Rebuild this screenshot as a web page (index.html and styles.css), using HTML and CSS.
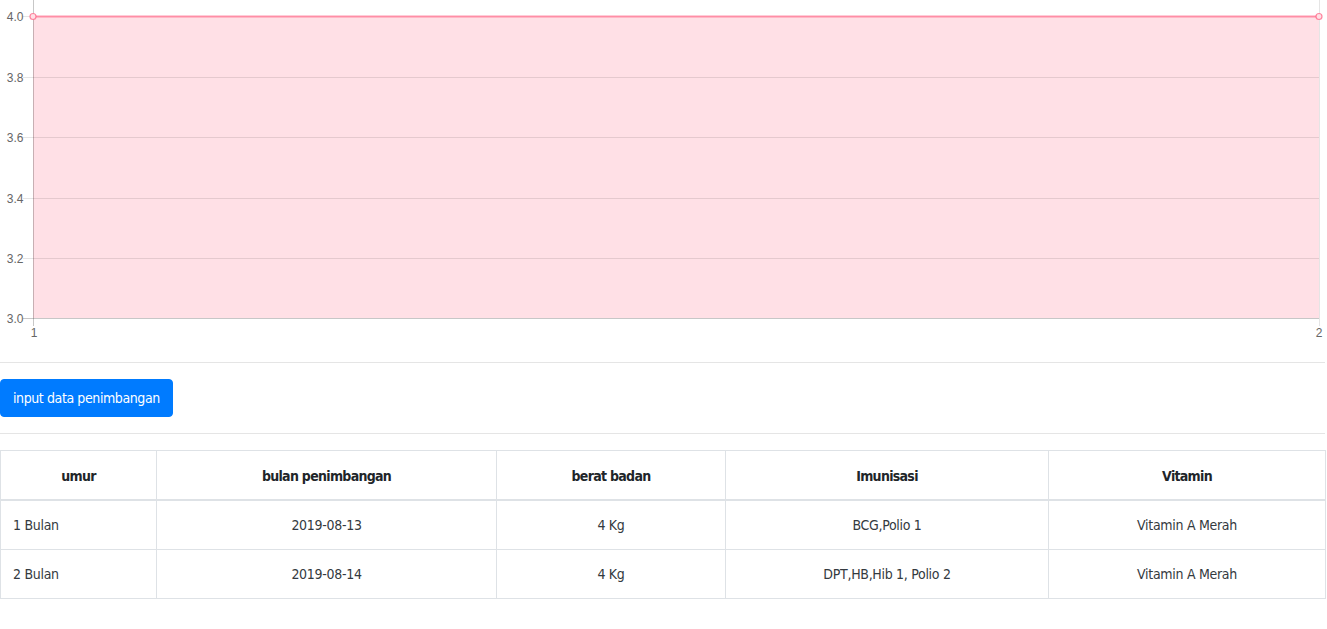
FILE: index.html
```html
<!DOCTYPE html>
<html lang="id">
<head>
<meta charset="utf-8">
<title>Grafik Penimbangan</title>
<link rel="stylesheet" href="styles.css">
</head>
<body>
<main class="page">
  <div class="chart">
    <svg width="1327" height="346" viewBox="0 0 1327 346" xmlns="http://www.w3.org/2000/svg">
      <rect x="33" y="16" width="1286" height="302" fill="#ffe0e6"/>
      <g stroke="rgba(0,0,0,0.1)" stroke-width="1">
        <line x1="23" y1="77.5" x2="1319" y2="77.5"/>
        <line x1="23" y1="137.5" x2="1319" y2="137.5"/>
        <line x1="23" y1="198.5" x2="1319" y2="198.5"/>
        <line x1="23" y1="258.5" x2="1319" y2="258.5"/>
        <line x1="23" y1="16.5" x2="33" y2="16.5"/>
        <line x1="1319.5" y1="0" x2="1319.5" y2="326"/>
      </g>
      <g stroke="rgba(0,0,0,0.22)" stroke-width="1">
        <line x1="33.5" y1="0" x2="33.5" y2="326"/>
        <line x1="23" y1="318.5" x2="1319" y2="318.5"/>
      </g>
      <line x1="33" y1="16.5" x2="1319" y2="16.5" stroke="rgba(255,99,132,0.65)" stroke-width="2"/>
      <circle cx="33" cy="16.5" r="3" fill="#ffe0e6" stroke="rgba(255,99,132,0.75)" stroke-width="1.2"/>
      <circle cx="1319" cy="16.5" r="3" fill="#ffe0e6" stroke="rgba(255,99,132,0.75)" stroke-width="1.2"/>
      <g class="tick" text-anchor="end">
        <text x="23.5" y="20.5">4.0</text>
        <text x="23.5" y="81.5">3.8</text>
        <text x="23.5" y="141.5">3.6</text>
        <text x="23.5" y="202.5">3.4</text>
        <text x="23.5" y="262.5">3.2</text>
        <text x="23.5" y="322.5">3.0</text>
      </g>
      <g class="tick" text-anchor="middle">
        <text x="34" y="337">1</text>
        <text x="1319" y="337">2</text>
      </g>
    </svg>
  </div>
  <hr class="divider">
  <button class="btn-primary" type="button">input data penimbangan</button>
  <hr class="divider">
  <table class="data-table">
    <colgroup>
      <col class="c1"><col class="c2"><col class="c3"><col class="c4"><col class="c5">
    </colgroup>
    <thead>
      <tr><th>umur</th><th>bulan penimbangan</th><th>berat badan</th><th>Imunisasi</th><th>Vitamin</th></tr>
    </thead>
    <tbody>
      <tr><td class="left">1 Bulan</td><td>2019-08-13</td><td>4 Kg</td><td>BCG,Polio 1</td><td>Vitamin A Merah</td></tr>
      <tr><td class="left">2 Bulan</td><td>2019-08-14</td><td>4 Kg</td><td>DPT,HB,Hib 1, Polio 2</td><td>Vitamin A Merah</td></tr>
    </tbody>
  </table>
</main>
</body>
</html>
```

FILE: styles.css
```css
html, body {
  margin: 0;
  padding: 0;
  background: #fff;
}
body {
  font-family: "DejaVu Sans Condensed", "DejaVu Sans", sans-serif;
  font-size: 14px;
  letter-spacing: -0.3px;
  line-height: 24px;
  color: #343a40;
}
.page {
  width: 1325px;
}
.chart {
  height: 346px;
}
.chart svg {
  display: block;
}
.tick {
  font-family: "Liberation Sans", Arial, sans-serif;
  font-size: 12px;
  letter-spacing: 0;
  fill: #666;
}
.divider {
  margin: 16px 0;
  border: 0;
  border-top: 1px solid rgba(0,0,0,0.1);
  height: 0;
}
.btn-primary {
  display: inline-block;
  font-family: inherit;
  font-size: 14px;
  letter-spacing: -0.4px;
  line-height: 24px;
  padding: 6px 12px;
  border: 1px solid #007bff;
  border-radius: 4px;
  background: #007bff;
  color: #fff;
  cursor: pointer;
}
.data-table {
  width: 1325px;
  border-collapse: collapse;
  table-layout: fixed;
}
.c1 { width: 156px; }
.c2 { width: 340px; }
.c3 { width: 229px; }
.c4 { width: 323px; }
.c5 { width: 277px; }
.data-table th,
.data-table td {
  border: 1px solid #dee2e6;
  padding: 12px;
  line-height: 24px;
  text-align: center;
  vertical-align: top;
}
.data-table th {
  font-weight: bold;
  letter-spacing: -0.7px;
  color: #212529;
  border-bottom: 2px solid #dee2e6;
  padding-top: 13px;
  padding-bottom: 11px;
}
.data-table td.left {
  text-align: left;
}
```
